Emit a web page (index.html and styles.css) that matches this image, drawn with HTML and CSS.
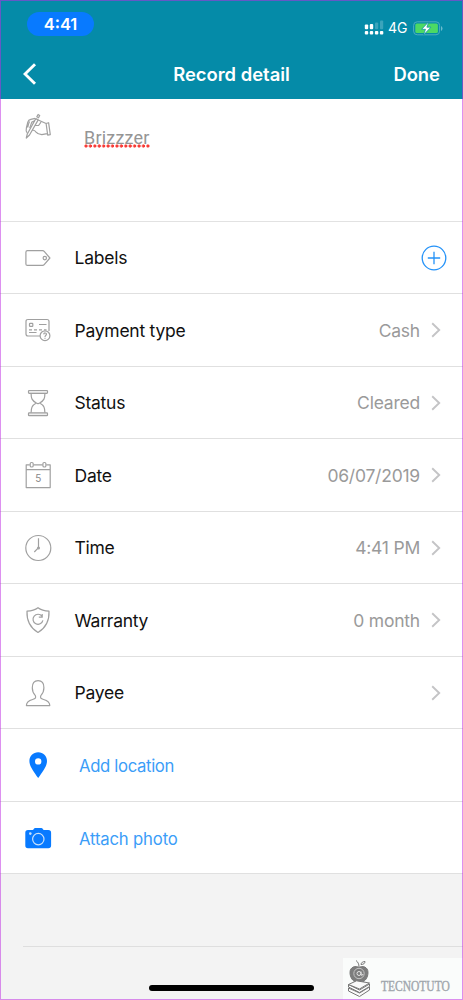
FILE: index.html
```html
<!DOCTYPE html>
<html lang="en">
<head>
<meta charset="utf-8">
<title>Record detail</title>
<link rel="stylesheet" href="styles.css">
</head>
<body>
<div class="screen">
  <header class="header">
    <div class="status-bar">
      <span class="clock">4:41</span>
      <div class="indicators">
        <svg class="signal" width="20" height="16" viewBox="0 0 20 16" fill="#fff">
          <rect x=".8" y="4.6" width="3.4" height="4.6" rx="1"/><rect x="5.8" y="4" width="3.4" height="5.2" rx="1"/>
          <rect x="11" y="2.6" width="3.2" height="6.6" rx="1" opacity=".22"/><rect x="16" y="0.4" width="3.2" height="8.8" rx="1" opacity=".22"/>
          <rect x=".8" y="11" width="3.4" height="3.6" rx="1"/><rect x="5.8" y="11" width="3.4" height="3.6" rx="1"/><rect x="10.9" y="11" width="3.4" height="3.6" rx="1"/><rect x="15.9" y="11" width="3.4" height="3.6" rx="1"/>
        </svg>
        <span class="network">4G</span>
        <svg class="battery" width="30" height="15" viewBox="0 0 30 15">
          <rect x=".6" y=".8" width="26" height="13" rx="3.6" fill="none" stroke="#4eacc0"/>
          <rect x="2.3" y="2.5" width="22.6" height="9.6" rx="1.6" fill="#4cd964"/>
          <path d="M28 5v5q1.500-.8 1.500-2.500T28 5z" fill="#6bbccd"/>
          <path d="M15.700 .8 8.700 8.300h3.800l-2 5.700 7.400-7.800h-4z" fill="#fff" stroke="#058ba8" stroke-width=".7"/>
        </svg>
      </div>
    </div>
    <nav class="nav">
      <svg class="back" width="14" height="22" viewBox="0 0 14 22"><path d="M12 1.300 2 11l10 9.700" fill="none" stroke="#fff" stroke-width="2.900"/></svg>
      <h1 class="title">Record detail</h1>
      <span class="done">Done</span>
    </nav>
  </header>
  <section class="note">
    <svg class="icon" width="28" height="28" viewBox="0 0 28 28">
      <path d="m2.300 25 1-4L11.800 5.600l2.400 1.300L5.500 22zM12.800 3.700l1.300-2.200 1.600.9-1.200 2.400z"/>
      <path d="M3.300 20c-1.400-1.500-1.500-3-.9-5.200l1.400-5.600c.5-2 1.500-2.600 3-2.900l4.400-.9M5.600 8.500c-1 1.500-1.400 3.600-1.900 6M10.800 7.700l-3 1.400-2.100 6M14.200 7l7.900 3.500M11 12.500h3.600l2.400-3.300M8.300 17.400c1.500-.5 2.500 0 3.500 1.400 1.600 2.100 3.700 2.600 6 2.800l5.300-1M22.100 10.500l2.500-.8 1.700 12-2.600.5z"/>
    </svg>
    <span class="note-text">Brizzzer</span>
  </section>
  <main class="rows">
    <div class="row">
      <svg class="icon" width="28" height="28" viewBox="0 0 28 28"><path d="M3.400 6.700h15.200q1 0 1.600.7l5.700 6.600-5.700 6.700q-.6.700-1.600.7H3.400q-1.500 0-1.500-1.500V8.200q0-1.500 1.500-1.500z"/><circle cx="20.800" cy="14.100" r="1.700"/></svg>
      <span class="label">Labels</span>
      <svg class="add" width="26" height="26" viewBox="0 0 26 26"><circle cx="13" cy="13" r="11.800"/><path d="M6.800 13h12.400M13 6.800v12.400"/></svg>
    </div>
    <div class="row">
      <svg class="icon" width="28" height="28" viewBox="0 0 28 28"><path d="M17 20H4q-2 0-2-2V5.500q0-2 2-2h19q2 0 2 2V15"/><rect x="5.500" y="7.300" width="3.300" height="3" rx=".6"/><path d="M15 8.500h7.500M5 13.800h3M10 13.800h3M15 13.800h3M20 13.800h2.500M5 16.500h7.500"/><circle cx="21" cy="19.700" r="4.900" fill="#fff"/><path d="M19.700 18.400c.1-2 3-1.800 2.700 0-.1 1-1.400 1.200-1.400 2.600m0 .7v1"/></svg>
      <span class="label">Payment type</span>
      <span class="value">Cash</span>
      <svg class="chevron" width="10" height="16" viewBox="0 0 10 16"><path d="m1.200 1.300 7 6.700-7 6.700"/></svg>
    </div>
    <div class="row">
      <svg class="icon" width="28" height="28" viewBox="0 0 28 28"><rect x="4.500" y="1.500" width="19" height="2.800" rx=".7" fill="#eee"/><rect x="4.500" y="23.800" width="19" height="2.800" rx=".7" fill="#eee"/><path d="M7.100 4.400c0 5 .8 7 5.200 9.600-4.400 2.600-5.200 4.600-5.200 9.700M20.900 4.400c0 5-.8 7-5.200 9.600 4.400 2.600 5.200 4.600 5.200 9.700M12.300 14l1.700.8 1.700-.8"/></svg>
      <span class="label">Status</span>
      <span class="value">Cleared</span>
      <svg class="chevron" width="10" height="16" viewBox="0 0 10 16"><path d="m1.200 1.300 7 6.700-7 6.700"/></svg>
    </div>
    <div class="row">
      <svg class="icon" width="28" height="28" viewBox="0 0 28 28"><path d="M5.800 3.800H2.200v22.800h24V3.800h-3.900M9.600 3.800h9M2.200 8.600h24"/><rect x="6.200" y="1.500" width="3" height="4.500" rx="1.300"/><rect x="18.900" y="1.500" width="3" height="4.500" rx="1.300"/><text class="day" x="14.200" y="20.500">5</text></svg>
      <span class="label">Date</span>
      <span class="value">06/07/2019</span>
      <svg class="chevron" width="10" height="16" viewBox="0 0 10 16"><path d="m1.200 1.300 7 6.700-7 6.700"/></svg>
    </div>
    <div class="row">
      <svg class="icon" width="28" height="28" viewBox="0 0 28 28"><circle cx="14.300" cy="14" r="12.500"/><path d="M14.500 4.200v9.500l-4.200 4.300"/><circle cx="14.500" cy="13.900" r=".9"/></svg>
      <span class="label">Time</span>
      <span class="value">4:41 PM</span>
      <svg class="chevron" width="10" height="16" viewBox="0 0 10 16"><path d="m1.200 1.300 7 6.700-7 6.700"/></svg>
    </div>
    <div class="row">
      <svg class="icon" width="28" height="28" viewBox="0 0 28 28"><path d="M14 1.700c3 2.300 7 3.300 11 3.500.4 8.700-2 15.800-11 21.300C5 21 2.600 13.900 3 5.200 7 5 11 4 14 1.700z"/><path d="M18 10.200a5 5 0 1 0 .9 4.200M18.200 8v3.200h-3.400"/></svg>
      <span class="label">Warranty</span>
      <span class="value">0 month</span>
      <svg class="chevron" width="10" height="16" viewBox="0 0 10 16"><path d="m1.200 1.300 7 6.700-7 6.700"/></svg>
    </div>
    <div class="row">
      <svg class="icon" width="28" height="28" viewBox="0 0 28 28"><path d="M2.400 26.600h23.400c0-4-2.500-5.100-6.200-6.100-2.700-.7-3.800-1.500-2.600-4.200 2-2 2.900-4.500 2.900-7.600 0-4.700-2-7-5.800-7s-5.800 2.300-5.800 7c0 3.100.9 5.600 2.900 7.600 1.200 2.700.1 3.500-2.600 4.200-3.700 1-6.200 2.100-6.200 6.100z"/></svg>
      <span class="label">Payee</span>
      <svg class="chevron" width="10" height="16" viewBox="0 0 10 16"><path d="m1.200 1.300 7 6.700-7 6.700"/></svg>
    </div>
    <div class="row">
      <svg class="action-icon" width="28" height="28" viewBox="0 0 28 28"><path fill-rule="evenodd" d="M14.200 1.300c5 0 8.800 3.800 8.800 8.600 0 5.600-4.500 11-8.800 17.200C9.900 20.900 5.400 15.500 5.400 9.900c0-4.800 3.800-8.600 8.800-8.600zm0 5.900a3.200 3.200 0 1 0 0 6.400 3.200 3.200 0 0 0 0-6.400z"/></svg>
      <span class="action action-location">Add location</span>
    </div>
    <div class="row">
      <svg class="action-icon" width="28" height="28" viewBox="0 0 28 28"><path d="M4 6h4.600c1 0 1.200-2 2.700-2h6c1.500 0 1.700 2 2.700 2h4.300q2.800 0 2.800 2.800v12.700q0 2.700-2.800 2.700H4q-2.700 0-2.700-2.700V8.800Q1.300 6 4 6z"/><circle cx="14.300" cy="15.100" r="5.700" fill="none" stroke="#c9e1fa" stroke-width="1.200"/><circle cx="6.300" cy="9.600" r="1.300" fill="#c9e1fa"/></svg>
      <span class="action">Attach photo</span>
    </div>
  </main>
  <footer class="footer">
    <div class="divider"></div>
    <div class="home-indicator"></div>
    <div class="watermark">
      <svg class="emblem" width="24" height="38" viewBox="0 0 24 38" fill="none" stroke="#777">
        <path d="M12 7c0-3-1-5-3-6.500M14 4.500c0-2 2-3 4-3 0 2-1.500 3-4 3z"/>
        <path d="M12 7.500c3-2 9-1 9 5 0 5-3 9-6 9.500H9c-3-.5-6-4.500-6-9.500 0-6 6-7 9-5z" fill="#7d7d7d"/>
        <circle cx="12" cy="13.500" r="5.200" stroke="#c4c4c4"/><circle cx="12" cy="13.500" r="2" stroke="#e4e4e4"/><path d="M14 11.500V15q1.500 1 2-1" stroke="#e4e4e4"/>
        <g fill="#fafafa"><path d="m1.500 31 11 5.500 10-6.500v-3l-10 6-11-5z"/><path d="m1.500 27 11 5.500 10-6V24l-10 6-11-5.500z"/><path d="m1.500 24.500 8-3.700 13 2.200-10 6z"/></g>
      </svg>
      <span class="brand">TECNOTUTO</span>
    </div>
  </footer>
</div>
</body>
</html>
```
FILE: styles.css
```css
* { box-sizing: border-box; }
body { margin: 0; font-family: Inter, "Liberation Sans", sans-serif; }
.screen { position: relative; display: flex; flex-direction: column; width: 463px; height: 1000px; overflow: hidden; background: #fff; }
.screen::after { content: ""; position: absolute; inset: 0; border: 1px solid rgba(190, 42, 226, .52); pointer-events: none; }
.header { height: 98.500px; flex: none; background: #058ba8; color: #fff; }
.status-bar { height: 49px; display: flex; justify-content: space-between; padding: 12px 20px 0 27px; }
.clock { width: 67px; height: 24px; border-radius: 12px; background: #087aff; font-size: 16.500px; font-weight: 600; line-height: 25px; text-align: center; }
.indicators { display: flex; align-items: center; height: 32px; }
.signal { margin-right: 4px; }
.network { width: 20px; margin-right: 5px; font-size: 14px; line-height: 18px; }
.nav { display: grid; grid-template-columns: 80px 1fr 80px; align-items: center; height: 50px; padding: 0 23px; }
.title { margin: 0; text-align: center; font-size: 18.400px; font-weight: 600; white-space: nowrap; }
.done { justify-self: end; font-size: 18.400px; font-weight: 600; }
.note { display: flex; height: 123.300px; flex: none; padding: 14px 24px; border-bottom: 1px solid #e2e2e2; }
.icon { flex: none; fill: none; stroke: #a0a0a0; stroke-width: 1.200; stroke-linejoin: round; }
.note-text { align-self: flex-start; margin: 14px 0 0 32px; color: #959595; font: 18px/21px Roboto, sans-serif; letter-spacing: .2px; background: radial-gradient(circle at 2px 2px, #f83b36 1.300px, transparent 1.900px) 0 100% / 4.430px 4px repeat-x; }
.row { display: flex; align-items: center; height: 72.500px; padding: 0 22px 0 24px; border-bottom: 1px solid #e0e0e0; }
.label { margin-left: 22.500px; color: #111; font-size: 17.500px; letter-spacing: -.25px; white-space: nowrap; }
.value { margin-left: auto; color: #9a9a9a; font-size: 17.500px; letter-spacing: -.22px; white-space: nowrap; }
.chevron { margin-left: 11px; fill: none; stroke: #c4c4c6; stroke-width: 1.900; }
.label + .chevron { margin-left: auto; }
.add { margin: 0 -6px 0 auto; fill: none; stroke: #2492f8; stroke-width: 1.300; }
.day { fill: #888; stroke: none; font-size: 10px; text-anchor: middle; }
.action-icon { flex: none; fill: #087aff; }
.action { margin: 2px 0 0 27px; color: #3b9df8; font-size: 16.700px; letter-spacing: -.17px; white-space: nowrap; }
.action-location { letter-spacing: -.34px; }
.footer { position: relative; flex: 1; background: #f3f3f3; }
.divider { margin: 71.500px 0 0 23px; height: 1px; background: #dedede; }
.home-indicator { width: 165px; height: 6px; margin: 38px auto 0; border-radius: 3px; background: #000; }
.watermark { position: absolute; right: 0; bottom: 0; display: flex; width: 120px; height: 42px; padding: 2px 0 0 4px; background: #fafcfb; }
.emblem { flex: none; }
.brand { margin: 16px 0 0 10px; color: #a0a6ac; font: 15px/20px "Liberation Serif", serif; -webkit-text-stroke: .4px; transform: scaleX(.767); transform-origin: left; }
```
